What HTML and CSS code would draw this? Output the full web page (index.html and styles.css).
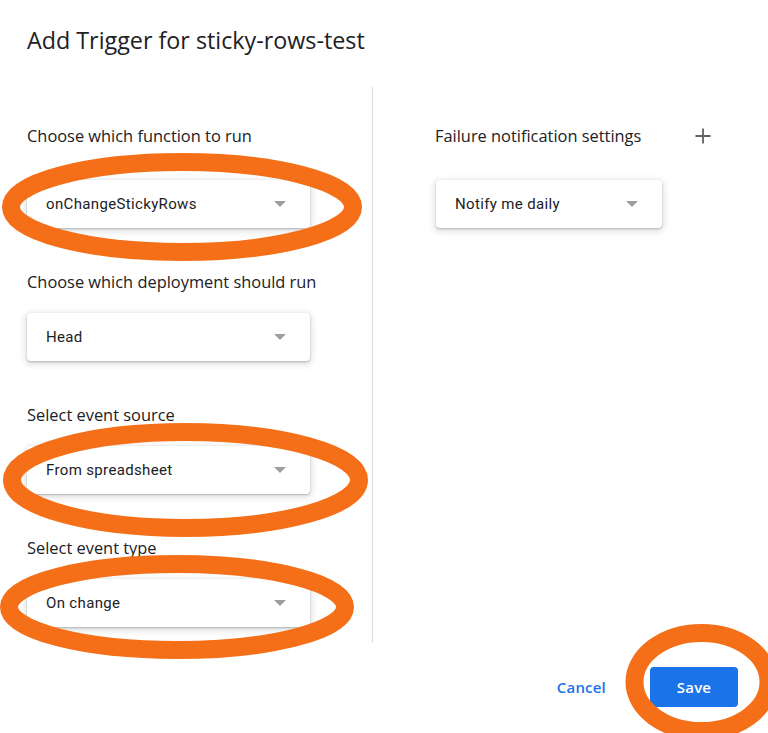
FILE: index.html
```html
<!DOCTYPE html>
<html>
<head>
<meta charset="utf-8">
<link rel="stylesheet" href="styles.css">
</head>
<body>
<div class="dialog">
  <div class="header">
    <h1 class="title">Add Trigger for sticky-rows-test</h1>
  </div>
  <div class="columns">
    <div class="col-left">
      <div class="label label-first">Choose which function to run</div>
      <div class="select select-first"><span class="select-text">onChangeStickyRows</span><span class="arrow"></span></div>
      <div class="label">Choose which deployment should run</div>
      <div class="select"><span class="select-text">Head</span><span class="arrow"></span></div>
      <div class="label">Select event source</div>
      <div class="select"><span class="select-text">From spreadsheet</span><span class="arrow"></span></div>
      <div class="label">Select event type</div>
      <div class="select"><span class="select-text">On change</span><span class="arrow"></span></div>
    </div>
    <div class="col-right">
      <div class="right-head">
        <div class="label">Failure notification settings</div>
        <svg class="plus" width="18" height="18" viewBox="0 0 18 18"><path d="M9 1.5v15M1.5 9h15" stroke="#5f6368" stroke-width="1.8" fill="none"/></svg>
      </div>
      <div class="select select-right"><span class="select-text">Notify me daily</span><span class="arrow"></span></div>
    </div>
  </div>
  <div class="footer">
    <button class="btn-cancel">Cancel</button>
    <button class="btn-save">Save</button>
  </div>
  <svg class="marks" width="768" height="733" viewBox="0 0 768 733">
    <ellipse cx="182" cy="207" rx="171" ry="45" />
    <ellipse cx="185.5" cy="480" rx="173.5" ry="48" />
    <ellipse cx="177" cy="607" rx="168" ry="43" />
    <ellipse cx="701.5" cy="682" rx="67" ry="49" />
  </svg>
</div>
</body>
</html>
```

FILE: styles.css
```css
html, body {
  margin: 0;
  padding: 0;
  background: #ffffff;
}
body {
  font-family: Roboto, "Liberation Sans", sans-serif;
  color: #202124;
  width: 768px;
  height: 733px;
  overflow: hidden;
}
.dialog {
  position: relative;
  width: 768px;
  height: 733px;
}
.header {
  height: 87px;
  box-sizing: border-box;
  padding: 25px 0 0 27px;
}
.title {
  margin: 0;
  font-family: "Open Sans", Roboto, sans-serif;
  font-size: 23.3px;
  line-height: 30px;
  font-weight: 400;
  letter-spacing: 0;
}
.columns {
  display: flex;
  height: 556px;
}
.col-left {
  width: 373px;
  box-sizing: border-box;
  padding: 37px 0 0 27px;
  border-right: 1px solid #dadce0;
}
.col-right {
  padding: 37px 0 0 62px;
}
.label {
  font-family: "Open Sans", Roboto, sans-serif;
  font-size: 16.4px;
  line-height: 24px;
  margin: 42px 0 19px 0;
}
.label-first {
  margin: 0 0 32px 0;
}
.select {
  width: 283px;
  height: 48px;
  box-sizing: border-box;
  border-radius: 4px;
  background: #fff;
  box-shadow: 0 1px 2px rgba(60,64,67,0.3), 0 2px 6px 2px rgba(60,64,67,0.15);
  display: flex;
  align-items: center;
  justify-content: space-between;
  padding: 0 24px 0 19px;
}
.select-text {
  font-size: 15px;
  letter-spacing: 0.35px;
}
.arrow {
  width: 0;
  height: 0;
  border-left: 6px solid transparent;
  border-right: 6px solid transparent;
  border-top: 6px solid #9e9e9e;
}
.right-head {
  display: flex;
  align-items: center;
  justify-content: space-between;
  width: 277px;
  margin-bottom: 32px;
}
.right-head .label {
  margin: 0;
}
.select-right {
  width: 226px;
  margin-left: 1px;
}
.footer {
  display: flex;
  justify-content: flex-end;
  align-items: center;
  padding: 24px 30px 0 0;
  gap: 36px;
}
.btn-cancel, .btn-save {
  font-family: "Open Sans", Roboto, sans-serif;
  font-size: 15px;
  font-weight: 600;
  letter-spacing: 0.2px;
  height: 40px;
  border: none;
  border-radius: 4px;
  cursor: pointer;
}
.btn-cancel {
  background: transparent;
  color: #1a73e8;
  padding: 0 8px;
}
.btn-save {
  background: #1a73e8;
  color: #fff;
  width: 88px;
}
.marks {
  position: absolute;
  left: 0;
  top: 0;
  pointer-events: none;
}
.marks ellipse {
  fill: none;
  stroke: #f46f18;
  stroke-width: 18;
}
```
